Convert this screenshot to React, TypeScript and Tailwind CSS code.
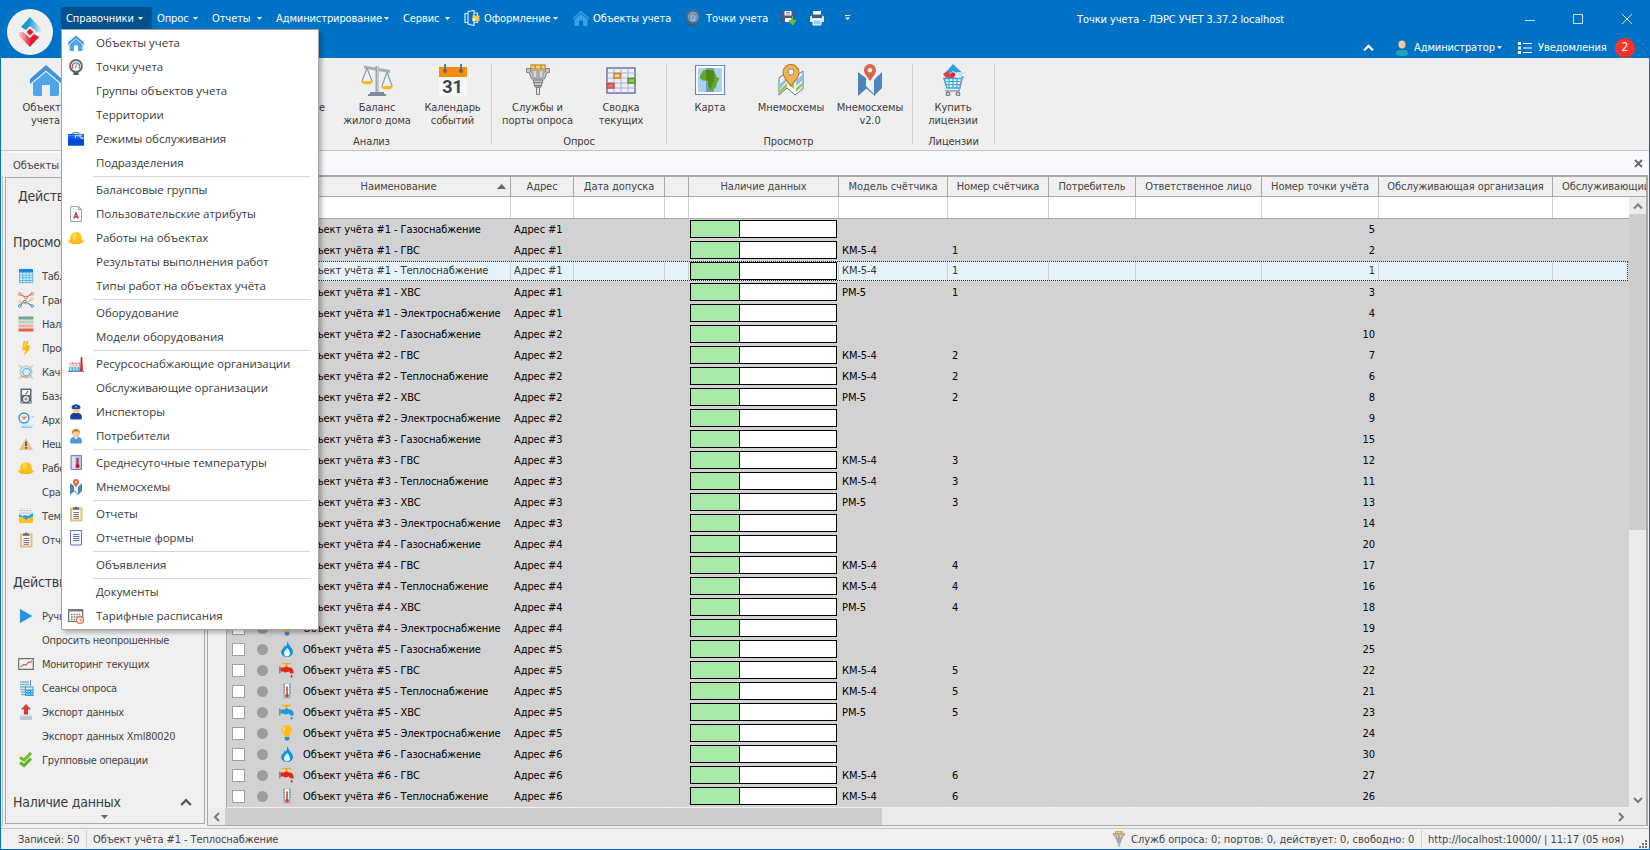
import React, { ReactNode } from "react";

type Children = { children?: ReactNode };

function Svg({ size = 16, box = 16, children }: { size?: number; box?: number; children: ReactNode }) {
  return (
    <svg width={size} height={size} viewBox={`0 0 ${box} ${box}`} className="block shrink-0" fill="none">
      {children}
    </svg>
  );
}

function House({ size = 16, faded = false }: { size?: number; faded?: boolean }) {
  return (
    <Svg size={size} box={32}>
      <path d="M0 15 L16 1 L32 15 V20 L16 6.500 L0 20Z" fill={faded ? "#2f93e0" : "#3f93dc"} />
      <path d="M16 8 L29 19 V30 Q29 32 27 32 H20 V21 H12 V32 H5 Q3 32 3 30 V19Z" fill={faded ? "#3ba0ea" : "#4da6ea"} />
    </Svg>
  );
}

function Meter({ faded = false }: { faded?: boolean }) {
  return (
    <Svg>
      <path d="M5.500 11.500h5V16h-5z" fill="#4a5560" />
      <circle cx="8" cy="7" r="6" fill={faded ? "#7fb4e0" : "#f4f7fa"} stroke="#5c6873" strokeWidth="1.800" />
      <path d="M5 9.500A3.500 3.500 0 0 1 8 3.800" stroke={faded ? "#b06a80" : "#e0584a"} strokeWidth="1.300" />
      <path d="M8 3.800A3.500 3.500 0 0 1 11 9.500" stroke="#3c8fe0" strokeWidth="1.300" />
      <path d="M7 9l2-3.500" stroke={faded ? "#b06a80" : "#e05040"} />
    </Svg>
  );
}

const Toolbox = () => (
  <Svg>
    <path d="M5 3.500V1.700h5.500l1 1.800" stroke="#8090a0" strokeWidth="1.200" />
    <path d="M0 3h16v11.500H0z" fill="#0c5cf0" />
    <path d="M0 8.500h16v6H0z" fill="#0848d8" />
    <path d="M0 4h16v1.200H0z" fill="#2f80ff" />
    <path d="M8 4.500h3l3 3 1.500-1M12 2l1 3" stroke="#b9c6d4" strokeWidth="1.700" />
    <path d="M7.500 4v3" stroke="#dbe4ee" strokeWidth="1.200" />
  </Svg>
);
const DocA = () => (
  <Svg>
    <path d="M2.500.5h8l3 3v12h-11z" fill="#f7fafb" stroke="#9aa9a8" />
    <path d="M10.500.5v3h3" stroke="#8aa39f" />
    <path d="M5.700 12.500 8 7l2.300 5.500M6.500 11h3" stroke="#c83248" strokeWidth="1.300" />
  </Svg>
);
const Helmet = () => (
  <Svg>
    <path d="M0 11.500Q1 10 2 9.500C2 5 5 2 8 2s6 3 6 7.500q1 .5 2 2Q13 14 8 14T0 11.500z" fill="#fdbf1b" />
    <path d="M5.500 3Q7 1.600 8.500 2L8 9.500 4.500 9.300Q4.500 5 5.500 3z" fill="#ffdc4d" />
    <path d="M0 11.500q8 4 16 0Q13 14 8 14t-8-2.500z" fill="#e8a010" />
  </Svg>
);
const Factory = () => (
  <Svg>
    <path d="M1 8.500 4.500 6.500v2L8 6.500v2l3.500-2v3" stroke="#e58080" />
    <path d="M1 9.500h11v1H1z" fill="#eb9a98" />
    <path d="M1 11h11v4H1z" fill="#53bdea" />
    <path d="M3 11v4M6 11v4M9 11v4" stroke="#d4f0fb" />
    <path d="M12 15l.7-14h1.600L15 15z" fill="#c93434" />
    <path d="M0 15.300h16" stroke="#5b6d7a" />
  </Svg>
);
function Person({ hat = false, small = false }: { hat?: boolean; small?: boolean }) {
  return (
    <Svg>
      {small ? (
        <path d="M2 13.500Q2 10 5.500 10h5q3.500 0 3.500 3.500Q14 16 8 16t-6-2.500z" fill="#22a3b8" />
      ) : (
        <path d="M2.500 15.500Q1 10.500 5 9h6q4 1.500 2.500 6.500z" fill={hat ? "#173fa4" : "#4a9ad8"} />
      )}
      {!small && <path d="M6 9 8 13l2-4z" fill={hat ? "#0b2465" : "#f3f7fb"} />}
      {!small && <path d="M8 10.500v4" stroke={hat ? "#1a3a98" : "#3768a8"} />}
      <ellipse cx="8" cy={small ? 4.500 : 5.500} rx="3.500" ry="4" fill="#f8cb94" />
      {hat && <path d="M3.500 4Q3 1 8 0.200 13 1 12.500 4L11.500 5h-7z" fill="#1546b8" />}
      {hat && <path d="M7.200 2.300h1.600v1.300H7.200z" fill="#f2c94c" />}
      {!hat && !small && <path d="M4 6Q3.500 1 8 .7 12.500 1 12 6L11 3.500H6z" fill="#b8841f" />}
    </Svg>
  );
}
const ThermoCard = () => (
  <Svg>
    <path d="M3 .5h10.500v14H3z" fill="#b9bfe6" stroke="#7a80b8" />
    <path d="M4 1.500h3v12H4z" fill="#dde0f6" />
    <path d="M9.500 3v7" stroke="#c0283c" strokeWidth="2" />
    <circle cx="9.500" cy="11" r="2" fill="#c0182c" />
  </Svg>
);
function MapPin({ size = 16 }: { size?: number }) {
  return (
    <Svg size={size} box={32}>
      <path d="M4 8l8 6v11l-8 7zM12 21l9 8V32l-9-8zM20 16l8-8v16l-8 8z" fill="#4d84bd" />
      <path d="M12 15l4 4 4-3v15L12 23z" fill="#eef2f5" />
      <path d="M12 22l8 8 1 2-9-8z" fill="#4d84bd" />
      <path d="M16 17C12 11 10 9.500 10 6a6 6 0 0 1 12 0c0 3.500-2 5-6 11z" fill="#db6449" />
      <circle cx="16" cy="6.200" r="2.200" fill="#f2f2f2" />
    </Svg>
  );
}
const Clipboard = () => (
  <Svg>
    <path d="M3 2.500h10.500v12H3z" fill="#f7f7f7" stroke="#e4bf83" strokeWidth="2" />
    <path d="M5 3.800V1.500h1.500Q8 -.5 9.700 1.500h1.600v2.300z" fill="#6b6b6b" />
    <path d="M5.500 6.500h5.500M5.500 8.500h5.500M5.500 10.500h5.500M5.500 12.300h5.500" stroke="#666" strokeWidth=".9" />
  </Svg>
);
const FormDoc = () => (
  <Svg>
    <path d="M2.500.5h11v14.500h-11z" fill="#f1f5ff" stroke="#6377ae" />
    <path d="M5 4.500h6.500M5 6.500h6.500M5 8.500h6.500M5 10.500h6.500" stroke="#6377ae" />
  </Svg>
);
const TariffCal = () => (
  <Svg>
    <path d="M.7 1.500h14v12H.7z" fill="#fff" stroke="#6a6a6a" strokeWidth="1.200" />
    <path d="M.5 1h14.500v2.500H.5z" fill="#777" />
    <path d="M3 6.500h9.500M3 9h9.500M3 11.500h6" stroke="#777" strokeWidth="1.500" strokeDasharray="1.600 1" />
    <circle cx="12" cy="12" r="3.400" fill="#fff" stroke="#dd6a50" strokeWidth="1.200" />
    <path d="M12 10v2.300h2" stroke="#dd6a50" />
  </Svg>
);

const TableIcon = () => (
  <Svg>
    <path d="M1 1h14v14H1z" fill="#d8effc" />
    <path d="M1 1h14v3H1z" fill="#1488dc" />
    <path d="M1 4.500h14M1 7.200h14M1 9.800h14M1 12.500h14M1 14.700h14M1.500 4v11M4.800 4v11M8 4v11M11.300 4v11M14.700 4v11" stroke="#49aeea" strokeWidth=".8" />
  </Svg>
);
const GraphIcon = () => (
  <Svg>
    <path d="M1.500 2 8 5.500 14.500 1.500" stroke="#d86a50" strokeWidth="1.200" />
    <path d="M1.500 14 6 9l8.500 5" stroke="#4d84bd" strokeWidth="1.200" />
    <path d="M1.500 9.500 7.500 12l6.500-5" stroke="#e4bf83" strokeWidth="1.200" />
    <g fill="#fff" strokeWidth="1">
      <g stroke="#d86a50"><circle cx="1.800" cy="2.200" r="1.300" /><circle cx="8" cy="5.500" r="1.300" /><circle cx="14.200" cy="1.800" r="1.300" /></g>
      <g stroke="#4d84bd"><circle cx="1.800" cy="14" r="1.300" /><circle cx="7" cy="9.500" r="1.300" /><circle cx="14.200" cy="14" r="1.300" /></g>
      <g stroke="#e4bf83"><circle cx="1.800" cy="9.500" r="1.200" /><circle cx="14" cy="7" r="1.200" /></g>
    </g>
  </Svg>
);
const Bars = () => (
  <Svg>
    <path d="M.5.5h15v3H.5z" fill="#74a392" />
    <path d="M.5 4.500h15v3H.5z" fill="#b9cfc6" />
    <path d="M.5 8.500h15v3H.5z" fill="#ecaea0" />
    <path d="M.5 12.500h15v3H.5z" fill="#db6449" />
  </Svg>
);
const Bolt = () => (
  <Svg>
    <path d="M5.500 1h5L9.500 5.500H12l-.5 4L6 15.500 7.500 10H4z" fill="#fdb913" />
    <path d="M7 1h2L7.500 6 5 9z" fill="#ffd75a" />
  </Svg>
);
const Quality = () => (
  <Svg>
    <path d="M1 1l14 14M15 1 1 15" stroke="#cdd4d8" strokeWidth="2" />
    <circle cx="8" cy="8" r="6" fill="#dbe2e6" stroke="#b0bcc4" />
    <path d="M4.500 8 7 4.500l4.500.5 1 3-2.500 4-4-.5z" fill="#d7effb" stroke="#58b0e0" />
    <path d="M3 12Q8 14.500 12 11" stroke="#e99a5a" />
  </Svg>
);
const BaseMeter = () => (
  <Svg>
    <path d="M2.500.5h11v15h-11z" fill="#59656e" />
    <path d="M4 2h8v5H4z" fill="#fff" />
    <path d="M7.500 6.500 10 3" stroke="#333" />
    <circle cx="8" cy="11" r="3" fill="#dfe5e9" />
    <circle cx="8" cy="11" r="1.200" fill="#78848c" />
    <path d="M3.500 14h1.500M11 14h1.500" stroke="#fff" />
  </Svg>
);
const Archive = () => (
  <Svg>
    <path d="M4 12h11v3.500H3z" fill="#cbe9f8" />
    <path d="M10 8h4v5h-4z" fill="#e2f2fa" />
    <circle cx="6" cy="6" r="5" fill="#fff" stroke="#3497d6" strokeWidth="1.400" />
    <path d="M4 4.500 6 7l2.500-2.500" stroke="#d8503c" strokeWidth="1.100" />
    <path d="M3.500 15.300h10M13.500 5h2.500" stroke="#5ab6e6" strokeWidth=".8" />
  </Svg>
);
const Warn = () => (
  <Svg>
    <path d="M8 2 15 14H1z" fill="#e8c08a" />
    <path d="M8 5.500v4.500" stroke="#5b5b5b" strokeWidth="1.800" />
    <path d="M7 11h2v1.800H7z" fill="#5b5b5b" />
  </Svg>
);
const TempMap = () => (
  <Svg>
    <path d="M1 1h14v6H1z" fill="#fafafa" />
    <path d="M1 2.500h14M1 5h14M3 0v7M6 0v7M9 0v7M12 0v7" stroke="#c6cace" strokeWidth=".9" />
    <path d="M1 8h14v7H1z" fill="#fdc12c" />
    <path d="M1 6l3 2 3-1 3 1 5-3v4q-4 0-7 3Q5 8 1 9z" fill="#2f9fe0" />
  </Svg>
);
const Play = () => (
  <Svg>
    <path d="M2 1 14.500 8 2 15z" fill="#2593e2" />
  </Svg>
);
const Monitor = () => (
  <Svg>
    <path d="M.7 2.700h14.600v10.600H.7z" fill="#f4f4f4" stroke="#6c6c6c" strokeWidth="1.200" />
    <path d="M2.500 11 6 8.500l2 .5 2.500-3 1.500.5L14 5" stroke="#db6449" strokeWidth="1.200" />
  </Svg>
);
const Sessions = () => (
  <Svg>
    <path d="M2 2h9M2 4.500h9M2 7h6M2 9.500h5M3 12h4M3 14.500h4" stroke="#7fb3d0" strokeWidth="1.300" />
    <path d="M12.500 0v6" stroke="#6b8ea4" />
    <path d="M7 6.500h8.500V16H7z" fill="#2a9ddc" />
    <path d="M8 7.500h6.500v2H8z" fill="#dff3fd" />
    <path d="M8 11.500h6.500M8 14h6.500" stroke="#dff3fd" strokeWidth="1.200" strokeDasharray="1.500 1" />
  </Svg>
);
const Export = () => (
  <Svg>
    <path d="M2 11h12v5H2z" fill="#bccad8" />
    <path d="M2 10h12v2H2z" fill="#dfe6ec" />
    <path d="M8 0l5 5.500h-3v5H6v-5H3z" fill="#d63c3c" />
  </Svg>
);
const Checks = () => (
  <Svg>
    <path d="M2 5.500 6 8 13 1" stroke="#6fbe2b" strokeWidth="3" />
    <path d="M2 10.500 6 13.500 13 6.500" stroke="#62b522" strokeWidth="3" />
  </Svg>
);

const Flame = () => (
  <Svg>
    <path d="M8.500 0Q9 3 12 6.500T13.500 13Q12 16 8 16T2.500 13Q1 10 4 7.500 5 6.500 5 4.500L6.500 6Q8.500 3 8.500 0z" fill="#0f94dc" />
    <path d="M8.500 7Q11.500 11 11 13t-3 2.500Q5.500 15.500 5 13t3.500-6z" fill="#e9f7ff" />
  </Svg>
);
function Tap({ color }: { color: string }) {
  return (
    <Svg>
      <path d="M3 1.500h9" stroke="#f0b020" strokeWidth="1.500" />
      <path d="M7.500 1v4" stroke="#d9a124" strokeWidth="1.500" />
      <path d="M0 4.500h1.500v7H0z" fill="#7c8790" />
      <path d="M1.500 5.500H5Q7.500 3.500 10 5.500h1q4 .5 3.500 6h-3.500Q11 9.500 9.500 9.500 6 11.500 4.500 9.500h-3z" fill={color} />
      <path d="M12.600 13v2.500" stroke={color} strokeWidth="1.600" />
    </Svg>
  );
}
const Thermo = () => (
  <Svg>
    <path d="M4 .3h8v15.400H4z" fill="#a9bcc9" />
    <path d="M6 1h4v12.500H6z" fill="#f2f5f7" />
    <path d="M4.500 2h1.200M4.500 4.500h1.200M4.500 7h1.200M4.500 9.500h1.200M10.300 2h1.200M10.300 4.500h1.200M10.300 7h1.200M10.300 9.500h1.200" stroke="#607c90" strokeWidth=".9" />
    <path d="M8 3.500v9" stroke="#d8553c" strokeWidth="1.800" />
    <circle cx="8" cy="12.700" r="1.900" fill="#d8452c" />
  </Svg>
);
const Bulb = () => (
  <Svg>
    <path d="M5 8.500Q3 6.500 3 4.500 3.500.3 8 .3t5 4.200q0 2-2 4L10.500 12h-5z" fill="#fcbd15" />
    <path d="M6 2Q4.300 3.500 5 6" stroke="#ffe48a" strokeWidth="1.300" />
    <path d="M5.700 12h4.600v2.500Q8 17 5.700 14.500z" fill="#2490d4" />
  </Svg>
);

const Scales = () => (
  <Svg size={32} box={32}>
    <path d="M3 3 29 7.500" stroke="#a3afb9" strokeWidth="3" />
    <path d="M14.500 2h3v26h-3z" fill="#98a6b1" />
    <path d="M16 2h1.500v26H16z" fill="#c0cad1" />
    <path d="M9 28h14v2H9zM7 30h18v2H7z" fill="#7c8b96" />
    <path d="M6 4 1 17M6 4l5 13M26 8l-5 14M26 8l5 14" stroke="#8f9ba5" strokeWidth="1.200" />
    <path d="M0 17h12q-1 3.500-6 3.500T0 17zM20 22h12q-1 3.500-6 3.500T20 22z" fill="#f9b81c" />
  </Svg>
);
const Calendar31 = () => (
  <Svg size={32} box={32}>
    <path d="M2 3h28v29H2z" fill="#f7f8f9" />
    <path d="M2 3h28v10H2z" fill="#fb8c0a" />
    <path d="M8 0v7.500M24 0v7.500" stroke="#5d6d78" strokeWidth="1.800" />
    <circle cx="8" cy="7" r="2" fill="#5d6d78" />
    <circle cx="24" cy="7" r="2" fill="#5d6d78" />
    <text x="15.500" y="29" textAnchor="middle" fontFamily="Roboto" fontWeight="bold" fontSize="18" fill="#37474f">31</text>
  </Svg>
);
function Plug({ size = 32 }: { size?: number }) {
  return (
    <Svg size={size} box={32}>
      <path d="M9 1h14v4H9z" fill="#f8d68e" stroke="#d09228" strokeWidth="1.400" />
      <path d="M13 1v4M19 1v4" stroke="#c98b24" strokeWidth="1.400" />
      <path d="M4.500 4.500h4V8h15V4.500h4v4H25L22.500 15h-13L7 8.500H4.500z" fill="#c2c4c6" stroke="#808285" />
      <path d="M9 6h14l-1.500 8h-11z" fill="#a9abae" />
      <path d="M11.500 7h2.500v6h-2zM18 7h2.500l-.5 6h-2z" fill="#d6d8da" />
      <path d="M11 16h10l-2 7h-6z" fill="#c2c4c6" stroke="#77797c" />
      <path d="M12 18.500h8M12.500 21.500h7" stroke="#7f8184" />
      <path d="M14.500 23.500h3v7h-3z" fill="#e4e4e4" stroke="#77797c" />
    </Svg>
  );
}
const GridIcon = () => (
  <Svg size={32} box={32}>
    <path d="M2 4h28v25H2z" fill="#edf0f8" stroke="#6573ad" strokeWidth="1.500" />
    <path d="M2 9h28M2 14h28M2 19h28M2 24h28M9 4v25M16 4v25M23 4v25" stroke="#a5aed0" />
    <path d="M9 9.500h6.500v4.500H9z" fill="#fbd48e" stroke="#cc7c28" strokeWidth="1.300" />
    <path d="M23 14.500h7v4.500h-7z" fill="#8ecb53" stroke="#5a9426" strokeWidth="1.300" />
    <path d="M2 19.500h7V24H2z" fill="#ee7070" stroke="#cc4545" strokeWidth="1.300" />
  </Svg>
);
const Africa = () => (
  <Svg size={32} box={32}>
    <path d="M1.500 1.500h29v29h-29z" fill="#fff" stroke="#7487b8" strokeWidth="1.200" />
    <path d="M4 4h8v24H4zM20 4h8v24h-8z" fill="#a9d2ee" />
    <path d="M12 4h8v24h-8z" fill="#6f9ec4" />
    <path d="M6 12 9 6.500l5-1.500 1 1.500h5l3 7 2.500.5L23 19l-1 4-4 4h-2l-2-5v-5l-5-.5-3-2z" fill="#6ba52a" />
    <path d="M12 6h4l4 1v10l-4 9-2-5v-5l-2-.5z" fill="#4f8a1d" />
  </Svg>
);
const MapGold = () => (
  <Svg size={32} box={32}>
    <path d="M4 14l8-6 8 5 8-6v18l-8 6-8-7-8 7z" fill="#f3f7f4" stroke="#5b7ba5" />
    <path d="M5 20l6-6v4l-6 7zM21 16l6-5v6l-6 5z" fill="#8cc4e4" />
    <path d="M5 26l7-7v4l-7 7zM21 24l6-5v3l-6 6zM14 17l5 4v4l-5-5z" fill="#9cc644" />
    <path d="M16 22Q8 13 8 8.500a8 8 0 0 1 16 0Q24 13 16 22z" fill="#f2b44e" stroke="#bd7b28" strokeWidth="1.200" />
    <circle cx="16" cy="8" r="3" fill="#fffaf0" stroke="#aaa28f" strokeWidth="1.500" />
  </Svg>
);
const Cart = () => (
  <Svg size={32} box={32}>
    <path d="M16 0l10 9.500H21L16 7l-5 4-2-3z" fill="#28a2e4" />
    <path d="M20 8h8l-4 4h-4z" fill="#bfe6fa" />
    <path d="M6 10l4-3 8 7H9z" fill="#e5404c" />
    <circle cx="16" cy="10.500" r="2.300" fill="#de1f2c" />
    <path d="M7 14.500h18l-2 9.500H10z" fill="#f4fbff" stroke="#34a4e0" strokeWidth="1.500" />
    <path d="M8 17.500h16M9 20.500h14M12 14v10M16 14v10M20 14v10" stroke="#34a4e0" strokeWidth="1.200" />
    <path d="M27 13h-2l-3 14H8" stroke="#939da6" strokeWidth="1.500" />
    <circle cx="11" cy="30" r="1.700" stroke="#7d868e" strokeWidth="1.500" />
    <circle cx="21" cy="30" r="1.700" stroke="#7d868e" strokeWidth="1.500" />
  </Svg>
);

const Caret = () => (
  <svg width="5" height="3" viewBox="0 0 5 3" className="block shrink-0">
    <path d="M0 0h5L2.500 3z" fill="currentColor" />
  </svg>
);
function Chevron({ dir = "up", w = 10 }: { dir?: "up" | "down" | "left" | "right"; w?: number }) {
  const d = { up: "M1 7.500 5 3.500 9 7.500", down: "M1 3 5 7 9 3", left: "M7 1 3 5 7 9", right: "M3 1 7 5 3 9" }[dir];
  return (
    <svg width={w} height={w} viewBox="0 0 10 10" className="block shrink-0" fill="none">
      <path d={d} stroke="currentColor" strokeWidth="2" />
    </svg>
  );
}

function MenuHead({ label, cls }: { label: string; cls: string }) {
  return (
    <div className={"flex h-[22px] shrink-0 items-center justify-between pl-[5px] pr-[9px] " + cls}>
      <span>{label}</span>
      <Caret />
    </div>
  );
}

function TitleBar() {
  return (
    <header className="flex h-[58px] shrink-0 bg-[#0072c6] text-white">
      <div className="w-[60px] shrink-0 pl-[6px] pt-[9px]">
        <div className="flex h-[46px] w-[46px] items-center justify-center rounded-full bg-[#f0f0f0]">
          <svg width="26" height="32" viewBox="0 0 26 32">
            <defs>
              <linearGradient id="lb" x1="0" x2="1"><stop offset=".4" stopColor="#1e96d4" /><stop offset="1" stopColor="#d6effa" /></linearGradient>
              <linearGradient id="lr" x1="0" x2="1"><stop offset="0" stopColor="#f9cfd2" /><stop offset=".6" stopColor="#e41b2b" /></linearGradient>
            </defs>
            <path d="M13 1 24 12v4h-4l-7-6-4 4-5-3z" fill="url(#lb)" />
            <path d="M13 31 2 20v-4h4l7 6 4-4 5 3z" fill="url(#lr)" />
            <path d="M13 12.500l3.500 3.500-3.500 3.500L9.500 16z" fill="#e41b2b" />
          </svg>
        </div>
      </div>
      <div className="flex min-w-0 flex-1 flex-col">
        <div className="flex h-[36px] items-start pt-[7px]">
          <MenuHead label="Справочники" cls="w-[91px] bg-[#02508e]" />
          <MenuHead label="Опрос" cls="w-[55px]" />
          <MenuHead label="Отчеты" cls="w-[64px]" />
          <MenuHead label="Администрирование" cls="w-[127px]" />
          <MenuHead label="Сервис" cls="w-[61px]" />
          <div className="flex h-[22px] w-[108px] items-center pl-[5px] pr-[9px]">
            <Svg>
              <path d="M4 3.500h-3v9h3M4 1.500 10 .5v15l-6-1.500zM10 3h3.500v9.500H10" stroke="#d9ecfa" strokeWidth="1.200" />
              <path d="M8.500 5.500h7v5.500h-7z" fill="#fbc63a" />
              <path d="M8.500 8.500h3V11h-3z" fill="#fff" />
            </Svg>
            <span className="ml-[4px] flex-1">Оформление</span>
            <Caret />
          </div>
          <div className="flex h-[22px] w-[118px] items-center pl-[6px]">
            <House faded />
            <span className="ml-[4px]">Объекты учета</span>
          </div>
          <div className="flex h-[22px] w-[96px] items-center">
            <Meter faded />
            <span className="ml-[5px]">Точки учета</span>
          </div>
          <div className="flex h-[22px] w-[28px] items-center">
            <Svg>
              <path d="M1 1h12v11H1z" fill="#5b5470" />
              <path d="M3.500 1h7v4.500h-7zM4 8h6.500v4H4z" fill="#f0f0f6" />
              <path d="M5 2.500h4M5 4h4" stroke="#8b88a0" strokeWidth=".8" />
              <path d="M11.500 6v5M8 10.500h7L11.500 15z" fill="#67c430" stroke="#67c430" />
            </Svg>
          </div>
          <div className="flex h-[22px] w-[35px] items-center">
            <Svg>
              <path d="M4 1h8v6H4z" fill="#fff" />
              <path d="M1 7Q1 5.500 3 5.500v2.500h10V5.500q2 0 2 1.500v5H1z" fill="#dfe3ee" />
              <path d="M3.500 4.500h9v3h-9z" fill="#50547c" />
              <path d="M4 10h8v5H4z" fill="#8fd0f6" stroke="#fff" />
            </Svg>
          </div>
          <div className="flex h-[22px] w-[8px] items-center">
            <svg width="7" height="6" viewBox="0 0 7 6"><path d="M1 0h5v1H1zM1 2.500h5L3.500 5z" fill="#fff" /></svg>
          </div>
          <div className="ml-auto flex h-[24px] items-center">
            <span className="w-[448px]">Точки учета - ЛЭРС УЧЕТ 3.37.2 localhost</span>
            <svg width="108" height="12" viewBox="0 0 108 12" fill="none" stroke="#cfe3f4" className="mr-[16px]">
              <path d="M0 7.500h10M48.500 1.500h9v9h-9zM97 1l10 10M107 1 97 11" />
            </svg>
          </div>
        </div>
        <div className="flex h-[22px] items-center justify-end pr-[14px] pt-px">
          <Chevron w={11} />
          <span className="ml-[20px]"><Person small /></span>
          <span className="ml-[4px] w-[83px]">Администратор</span>
          <Caret />
          <svg width="14" height="12" viewBox="0 0 14 12" className="ml-[16px]"><path d="M0 0h3v3H0zM0 4.500h3v3H0zM0 9h3v3H0zM5 1h9v1H5zM5 5.500h9v1H5zM5 10h9v1H5z" fill="#fff" /></svg>
          <span className="ml-[6px] w-[77px]">Уведомления</span>
          <span className="flex h-[20px] w-[20px] items-center justify-center rounded-full bg-[#fc3228] text-[12px]">2</span>
        </div>
      </div>
    </header>
  );
}

function Big({ icon, a, b, cls }: { icon: ReactNode; a: string; b?: string; cls: string }) {
  return (
    <div className={"flex flex-col items-center whitespace-nowrap leading-[13px] " + cls}>
      <div className="h-[36.500px]">{icon}</div>
      <span>{a}</span>
      <span>{b}</span>
    </div>
  );
}
function Group({ label, cls, children }: Children & { label: string; cls: string }) {
  return (
    <div className={"flex h-[80px] shrink-0 flex-col border-r border-[#cfcfcf] " + cls}>
      <div className="flex h-[69px] shrink-0">{children}</div>
      <div className="shrink-0 text-center leading-[16px]">{label}</div>
    </div>
  );
}

function Ribbon() {
  return (
    <div className="flex h-[93px] shrink-0 border-b border-[#c3c3c3] bg-[#efefef] pt-[6px] text-[#3c3c3c] [&>div>div:last-child]:mt-[1px]">
      <Group label="Анализ" cls="w-[491px] pl-[5px] [&>div:last-child]:pl-[246px]">
        <Big cls="w-[79px]" icon={<House size={32} />} a="Объекты" b="учета" />
        <Big cls="w-[170px]" icon={null} a="" />
        <Big cls="w-[79px] items-end pr-[9px]" icon={null} a="Потребление" />
        <Big cls="w-[86px]" icon={<Scales />} a="Баланс" b="жилого дома" />
        <Big cls="w-[65px]" icon={<Calendar31 />} a="Календарь" b="событий" />
      </Group>
      <Group label="Опрос" cls="w-[175px]">
        <Big cls="w-[91px]" icon={<Plug />} a="Службы и" b="порты опроса" />
        <Big cls="w-[76px]" icon={<GridIcon />} a="Сводка" b="текущих" />
      </Group>
      <Group label="Просмотр" cls="w-[246px] [&>div:last-child]:pr-[2px]">
        <Big cls="w-[86px]" icon={<Africa />} a="Карта" />
        <Big cls="w-[76px]" icon={<MapGold />} a="Мнемосхемы" />
        <Big cls="w-[82px]" icon={<MapPin size={32} />} a="Мнемосхемы" b="v2.0" />
      </Group>
      <Group label="Лицензии" cls="w-[82px]">
        <Big cls="w-[80px]" icon={<Cart />} a="Купить" b="лицензии" />
      </Group>
    </div>
  );
}

function SideItem({ icon, label }: { icon?: ReactNode; label: string }) {
  return (
    <div className="flex h-[24px] items-center pl-[12px]">
      <span className="w-[24px]">{icon}</span>
      <span className="pt-[1px] tracking-[-0.26px] text-[#444]">{label}</span>
    </div>
  );
}

function Sidebar() {
  return (
    <aside className="mr-[1px] mt-[1px] w-[204px] shrink-0 border-l border-[#c4c4c4] pl-[2px] pt-[1px]">
      <div className="flex h-[647px] w-[200px] flex-col border border-[#a9a9a9] bg-[#f0f0f0] text-[#3b3b3b]">
        <div className="flex h-[36px] items-center pl-[12px] text-[14px] tracking-[-0.25px]">Действия</div>
        <div className="flex h-[56px] items-center pl-[7px] text-[14px] tracking-[-0.25px]">Просмотр</div>
        <div className="mt-[-6px]">
          <SideItem icon={<TableIcon />} label="Таблица" />
          <SideItem icon={<GraphIcon />} label="Графики" />
          <SideItem icon={<Bars />} label="Наличие" />
          <SideItem icon={<Bolt />} label="Проверка" />
          <SideItem icon={<Quality />} label="Качество" />
          <SideItem icon={<BaseMeter />} label="База данных" />
          <SideItem icon={<Archive />} label="Архив" />
          <SideItem icon={<Warn />} label="Нештатные" />
          <SideItem icon={<Helmet />} label="Работы" />
          <SideItem label="Сравнение" />
          <SideItem icon={<TempMap />} label="Темпера" />
          <SideItem icon={<Clipboard />} label="Отчеты" />
        </div>
        <div className="flex h-[60px] items-center pl-[7px] text-[14px] tracking-[-0.25px]">Действия</div>
        <div className="mt-[-8px]">
          <SideItem icon={<Play />} label="Ручной" />
          <SideItem label="Опросить неопрошенные" />
          <SideItem icon={<Monitor />} label="Мониторинг текущих" />
          <SideItem icon={<Sessions />} label="Сеансы опроса" />
          <SideItem icon={<Export />} label="Экспорт данных" />
          <SideItem label="Экспорт данных Xml80020" />
          <SideItem icon={<Checks />} label="Групповые операции" />
        </div>
        <div className="mt-[19px] flex h-[22px] items-center justify-between pl-[7px] pr-[12px] text-[14px] tracking-[-0.25px]">
          Наличие данных
          <span className="text-[#555]"><Chevron w={12} /></span>
        </div>
        <div className="flex flex-1 justify-center pr-[2px] pt-[2px] text-[#666]">
          <svg width="7" height="4" viewBox="0 0 7 4"><path d="M0 0h7L3.500 4z" fill="currentColor" /></svg>
        </div>
      </div>
    </aside>
  );
}

const columns = [
  ["Адрес", "w-[63px]"],
  ["Дата допуска", "w-[91px]"],
  ["", "w-[24px]"],
  ["Наличие данных", "w-[150px]"],
  ["Модель счётчика", "w-[109px]"],
  ["Номер счётчика", "w-[101px]"],
  ["Потребитель", "w-[87px]"],
  ["Ответственное лицо", "w-[126px]"],
  ["Номер точки учёта", "w-[117px]"],
  ["Обслуживающая организация", "w-[174px]"],
];

const kinds = [
  { name: "Газоснабжение", icon: <Flame />, model: "", no: 5 },
  { name: "ГВС", icon: <Tap color="#e22a10" />, model: "КМ-5-4", no: 2 },
  { name: "Теплоснабжение", icon: <Thermo />, model: "КМ-5-4", no: 1 },
  { name: "ХВС", icon: <Tap color="#1c98dc" />, model: "РМ-5", no: 3 },
  { name: "Электроснабжение", icon: <Bulb />, model: "", no: 4 },
];
const rows = Array.from({ length: 28 }, (_, i) => {
  const object = Math.floor(i / 5) + 1;
  return { object, kind: kinds[i % 5], no: (object - 1) * 5 + kinds[i % 5].no, selected: i === 2 };
});

function Row({ row }: { row: (typeof rows)[number] }) {
  const { object, kind, no, selected } = row;
  const line = selected ? " border-r border-[#cdcdcd]" : " border-r border-[#d0d0d0]";
  return (
    <div className="flex h-[21px] whitespace-nowrap bg-[#d2d2d2] text-black">
      <div
        className={
          "flex h-[20px] w-[1401px] items-stretch " +
          (selected ? "border border-l-0 border-dotted border-[#222] bg-[#e5f2fa] leading-[18px] text-[#333]" : "leading-[22px]")
        }
      >
        <div className="flex w-[24px] items-center pl-[5px]"><div className="h-[13px] w-[13px] border border-[#a0a0a0] bg-white" /></div>
        <div className="flex w-[23px] items-center justify-center"><div className="h-[11px] w-[11px] rounded-full bg-[#9d9d9d]" /></div>
        <div className="flex w-[26px] items-center pl-[5px]">{kind.icon}</div>
        <div className={"w-[211px] pl-[3px]" + line}>Объект учёта #{object} - {kind.name}</div>
        <div className={"w-[63px] pl-[3px]" + line}>Адрес #{object}</div>
        <div className={"w-[91px]" + line} />
        <div className={"w-[24px]" + line} />
        <div className={"flex w-[150px] items-center pl-[1px]" + line}>
          <div className="flex h-[18px] w-[147px] shrink-0 border border-black bg-white">
            <div className="w-[49px] border-r border-black bg-[#a8e8a8]" />
          </div>
        </div>
        <div className={"w-[109px] pl-[3px]" + line}>{kind.model}</div>
        <div className={"w-[101px] pl-[4px]" + line}>{kind.model ? object : ""}</div>
        <div className={"w-[87px]" + line} />
        <div className={"w-[126px]" + line} />
        <div className={"w-[117px] pr-[3px] text-right" + line}>{no}</div>
        <div className={"w-[174px]" + line} />
        <div className="flex-1" />
      </div>
    </div>
  );
}

function Grid() {
  return (
    <section className="flex h-[651px] min-w-0 flex-1 flex-col border-b border-l border-r-2 border-t-2 border-[#a9a9a9] bg-[#f0f0f0]">
      <div className="flex h-[20px] shrink-0 items-stretch overflow-hidden whitespace-nowrap border-b border-[#a9a9a9] text-center leading-[20px] text-[#444]">
        <div className="w-[19px] shrink-0 border-r border-[#a9a9a9]" />
        <div className="w-[24px] shrink-0 border-r border-[#a9a9a9]" />
        <div className="w-[24px] shrink-0 border-r border-[#a9a9a9]" />
        <div className="w-[25px] shrink-0 border-r border-[#a9a9a9]" />
        <div className="flex w-[211px] shrink-0 items-center border-r border-[#a9a9a9] pr-[4px]">
          <span className="flex-1">Наименование</span>
          <svg width="9" height="5" viewBox="0 0 9 5"><path d="M4.500 0 9 5H0z" fill="#666" /></svg>
        </div>
        {columns.map(([label, w]) => (
          <div key={label} className={"shrink-0 border-r border-[#a9a9a9] " + w}>{label}</div>
        ))}
        <div className="pl-[9px]">Обслуживающий</div>
      </div>
      <div className="flex min-h-0 flex-1">
        <div className="w-[19px] shrink-0 border-r border-[#a9a9a9]" />
        <div className="w-[1402px] shrink-0 overflow-hidden">
          <div className="flex h-[22px] border-b border-[#a9a9a9] bg-white">
            <div className="w-[73px] border-r border-[#d0d0d0]" />
            <div className="w-[211px] border-r border-[#d0d0d0]" />
            {columns.map(([label, w]) => (
              <div key={label} className={"shrink-0 border-r border-[#d0d0d0] " + w} />
            ))}
          </div>
          {rows.map((row) => <Row key={row.no} row={row} />)}
        </div>
        <div className="flex flex-1 flex-col items-center bg-[#ebebeb] text-[#7a7a7a]">
          <div className="flex h-[17px] items-center"><Chevron /></div>
          <div className="h-[316px] w-full bg-[#cdcdcd]" />
          <div className="mt-auto flex h-[16px] items-center"><Chevron dir="down" /></div>
        </div>
      </div>
      <div className="flex h-[17px] shrink-0 items-center bg-[#ebebeb] text-[#7a7a7a]">
        <div className="flex w-[17px] justify-center"><Chevron dir="left" /></div>
        <div className="h-full w-[657px] bg-[#cdcdcd]" />
        <div className="ml-auto mr-[20px]"><Chevron dir="right" /></div>
      </div>
    </section>
  );
}

const menu: [string, ReactNode?][][] = [
  [["Объекты учета", <House />], ["Точки учета", <Meter />], ["Группы объектов учета"], ["Территории"], ["Режимы обслуживания", <Toolbox />], ["Подразделения"]],
  [["Балансовые группы"], ["Пользовательские атрибуты", <DocA />], ["Работы на объектах", <Helmet />], ["Результаты выполнения работ"], ["Типы работ на объектах учёта"]],
  [["Оборудование"], ["Модели оборудования"]],
  [["Ресурсоснабжающие организации", <Factory />], ["Обслуживающие организации"], ["Инспекторы", <Person hat />], ["Потребители", <Person />]],
  [["Среднесуточные температуры", <ThermoCard />], ["Мнемосхемы", <MapPin />]],
  [["Отчеты", <Clipboard />], ["Отчетные формы", <FormDoc />]],
  [["Объявления"]],
  [["Документы"], ["Тарифные расписания", <TariffCal />]],
];

function DropMenu() {
  return (
    <div className="absolute left-[60px] top-[29px] w-[258px] border border-[#a3a3a3] bg-white py-px font-['Open_Sans',sans-serif] text-[11.500px] tracking-[-0.03px] text-[#3b3b3b] shadow-[3px_3px_4px_rgba(0,0,0,0.25)]">
      {menu.map((group, i) => (
        <div key={i}>
          {i > 0 && <div className="ml-[31px] mr-[8px] mt-px h-[2px] border-t border-[#d5d5d5]" />}
          {group.map(([label, icon]) => (
            <div key={label} className="flex h-[24px] items-center whitespace-nowrap pl-[6px]">
              <span className="w-[28px]">{icon}</span>
              <span className="pb-[2px]">{label}</span>
            </div>
          ))}
        </div>
      ))}
    </div>
  );
}

function StatusBar() {
  return (
    <footer className="mt-[2px] flex flex-1 items-center border-t border-[#c4c4c4] bg-[#f0f0f0] text-[#444]">
      <div className="flex h-[18px] w-[86px] items-center border-r border-[#cfcfcf] pl-[17px]">Записей: 50</div>
      <div className="pl-[6px]">Объект учёта #1 - Теплоснабжение</div>
      <div className="ml-auto flex h-[18px] w-[311px] items-center border-r border-[#cfcfcf]">
        <Plug size={16} />
        <span className="ml-[4px] whitespace-nowrap tracking-[0px]">Служб опроса: 0; портов: 0, действует: 0, свободно: 0</span>
      </div>
      <div className="w-[217px] whitespace-nowrap pl-[6px] tracking-[0px]">http://localhost:10000/ | 11:17 (05 ноя)</div>
      <svg width="9" height="9" viewBox="0 0 9 9" className="mr-[1px] self-end"><path d="M6 0h2v2H6zM3 3h2v2H3zM6 3h2v2H6zM0 6h2v2H0zM3 6h2v2H3zM6 6h2v2H6z" fill="#777" /></svg>
    </footer>
  );
}

export default function App() {
  return (
    <div className="relative flex h-[850px] w-[1650px] flex-col overflow-hidden border-x border-b border-[#0072c6] bg-[#f0f0f0] font-['DejaVu_Sans_Condensed','DejaVu_Sans',sans-serif] text-[11px] leading-[13px] tracking-[-0.09px]">
      <TitleBar />
      <Ribbon />
      <div className="flex h-[24px] shrink-0 items-center bg-[#f8f9fc] pl-[2px] text-[#444]">
        <div className="mt-[2px] flex h-[22px] w-[120px] items-center bg-[#f0f0f0] pl-[10px] pt-[2px]">Объекты учета</div>
        <svg width="9" height="9" viewBox="0 0 9 9" className="ml-auto mr-[6px]"><path d="M1 1l7 7M8 1 1 8" stroke="#666" strokeWidth="1.800" /></svg>
      </div>
      <div className="flex h-[651px] shrink-0 pl-[1px] pr-[1px]">
        <Sidebar />
        <Grid />
      </div>
      <StatusBar />
      <DropMenu />
    </div>
  );
}
